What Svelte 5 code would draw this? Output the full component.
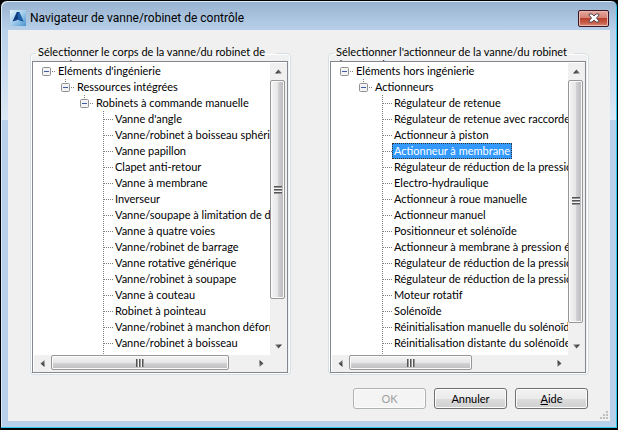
<script lang="ts">
	type Item = { label: string; children?: Item[] };
	type Pane = { id: string; title: string; root: Item; vThumb: number; hThumb: number };

	const leaves = (labels: string[]): Item[] => labels.map((label) => ({ label }));

	// Thumb sizes are the visible share of each list, in percent of the track
	const panes: Pane[] = [
		{
			id: "body",
			title: "Sélectionner le corps de la vanne/du robinet de contrôle :",
			vThumb: 85,
			hThumb: 88,
			root: {
				label: "Eléments d'ingénierie",
				children: [
					{
						label: "Ressources intégrées",
						children: [
							{
								label: "Robinets à commande manuelle",
								children: leaves([
									"Vanne d'angle",
									"Vanne/robinet à boisseau sphérique",
									"Vanne papillon",
									"Clapet anti-retour",
									"Vanne à membrane",
									"Inverseur",
									"Vanne/soupape à limitation de débit",
									"Vanne à quatre voies",
									"Vanne/robinet de barrage",
									"Vanne rotative générique",
									"Vanne/robinet à soupape",
									"Vanne à couteau",
									"Robinet à pointeau",
									"Vanne/robinet à manchon déformable",
									"Vanne/robinet à boisseau"
								])
							}
						]
					}
				]
			}
		},
		{
			id: "actuator",
			title: "Sélectionner l'actionneur de la vanne/du robinet de contrôle :",
			vThumb: 94,
			hThumb: 61,
			root: {
				label: "Eléments hors ingénierie",
				children: [
					{
						label: "Actionneurs",
						children: leaves([
							"Régulateur de retenue",
							"Régulateur de retenue avec raccordement",
							"Actionneur à piston",
							"Actionneur à membrane",
							"Régulateur de réduction de la pression",
							"Electro-hydraulique",
							"Actionneur à roue manuelle",
							"Actionneur manuel",
							"Positionneur et solénoïde",
							"Actionneur à membrane à pression équilibrée",
							"Régulateur de réduction de la pression ",
							"Régulateur de réduction de la pression  ",
							"Moteur rotatif",
							"Solénoïde",
							"Réinitialisation manuelle du solénoïde",
							"Réinitialisation distante du solénoïde"
						])
					}
				]
			}
		}
	];

	let selected = $state("Actionneur à membrane");
	let closed = $state<Record<string, boolean>>({});
</script>

{#snippet arrow(dir: string)}
	<button class="arrow" aria-label={dir}>
		<svg class={dir} width="7" height="7" viewBox="0 0 7 7" aria-hidden="true">
			<path d="M0 5.5 3.5 1.5 7 5.5z" fill="url(#arrow-fill)" />
		</svg>
	</button>
{/snippet}

{#snippet node(item: Item)}
	<li class:branch={item.children}>
		<div class="row">
			{#if item.children}
				<button
					class="toggle"
					aria-label="Développer ou réduire"
					onclick={() => (closed[item.label] = !closed[item.label])}
				>
					<svg width="9" height="9" viewBox="0 0 9 9" aria-hidden="true">
						<rect x="0.5" y="0.5" width="8" height="8" rx="1" fill="#f3f3f3" stroke="#919191" />
						<path d="M2 4.5h5" stroke="#3d5ba5" />
						{#if closed[item.label]}
							<path d="M4.5 2v5" stroke="#3d5ba5" />
						{/if}
					</svg>
				</button>
			{/if}
			<span class="dots"></span>
			<button
				class="label"
				class:selected={selected === item.label}
				onclick={() => (selected = item.label)}
			>
				{item.label}
			</button>
		</div>
		{#if item.children && !closed[item.label]}
			<ul class:leaves={!item.children[0].children}>
				{#each item.children as child}
					{@render node(child)}
				{/each}
			</ul>
		{/if}
	</li>
{/snippet}

<div class="window">
	<header>
		<svg class="logo" width="16" height="16" viewBox="0 0 16 16" aria-hidden="true">
			<defs>
				<linearGradient id="logo-fill" x1="0" y1="0" x2="1" y2="1">
					<stop offset="0" stop-color="#e4f2fb" />
					<stop offset="0.5" stop-color="#a3cdeb" />
					<stop offset="1" stop-color="#4a94cf" />
				</linearGradient>
				<linearGradient id="arrow-fill" x1="0" y1="0" x2="1" y2="0">
					<stop offset="0" stop-color="#222" />
					<stop offset="1" stop-color="#888" />
				</linearGradient>
			</defs>
			<rect width="16" height="16" fill="url(#logo-fill)" />
			<path d="M2.5 11.5 6.8 2h2.4l4.3 9.500L10 10.500 8 9.500 6 10.500z" fill="#0f3f80" />
			<path d="M8 3v6.500l2 1 3.500 1L9.200 2z" fill="#1d5fa8" />
		</svg>
		<h1>Navigateur de vanne/robinet de contrôle</h1>
		<button class="close" aria-label="Fermer">
			<svg width="12" height="10" viewBox="0 0 12 10" aria-hidden="true">
				<path
					d="M1 1h3l2 2 2-2h3v1L8.500 5 11 8v1H8L6 7 4 9H1V8l2.500-3L1 2z"
					fill="#fff"
					stroke="#5b4a55"
				/>
			</svg>
		</button>
	</header>

	<main>
		<div class="panes">
			{#each panes as pane (pane.id)}
				<fieldset>
					<legend>{pane.title}</legend>
					<div class="tree">
						<div class="view">
							<ul class="root">
								{@render node(pane.root)}
							</ul>
						</div>
						<div class="bar vertical">
							{@render arrow("up")}
							<div class="track">
								<div class="thumb" style="height: {pane.vThumb}%"><i></i></div>
							</div>
							{@render arrow("down")}
						</div>
						<div class="bar horizontal">
							{@render arrow("left")}
							<div class="track">
								<div class="thumb" style="width: {pane.hThumb}%"><i></i></div>
							</div>
							{@render arrow("right")}
						</div>
						<div class="corner"></div>
					</div>
				</fieldset>
			{/each}
		</div>

		<footer>
			<button class="action" disabled>OK</button>
			<button class="action">Annuler</button>
			<button class="action"><u>A</u>ide</button>
		</footer>
		<svg class="grip" width="9" height="9" viewBox="0 0 9 9" aria-hidden="true">
			<path
				d="M6 0h2v2H6zM3 3h2v2H3zM6 3h2v2H6zM0 6h2v2H0zM3 6h2v2H3zM6 6h2v2H6z"
				fill="#bfbfbf"
			/>
		</svg>
	</main>
</div>

<style>
	:global(body) {
		background: #000;
	}

	.window {
		box-sizing: border-box;
		padding: 0 6px 7px;
		border: 1px solid #000;
		border-radius: 7px 7px 0 0;
		background:
			linear-gradient(#97b2d0, #b9d1ea 30px, #dce8f5 119px, transparent 119px) no-repeat,
			#b9d0ea;
		box-shadow:
			inset -1px -1px #2bcbf0,
			inset 1px 1px #dcebf8;
		font-family: Lato, "Liberation Sans", sans-serif;
		font-size: 11px;
		color: #000;
	}

	button {
		margin: 0;
		padding: 0;
		border: 0;
		background: none;
		font: inherit;
		color: inherit;
	}

	header {
		display: flex;
		align-items: center;
		height: 29px;
		padding: 5px 2px 0 3px;
		box-sizing: border-box;
	}

	h1 {
		flex: 1;
		margin: 0 0 0 4px;
		font: 12px/16px Roboto, sans-serif;
	}

	.close {
		display: flex;
		align-items: center;
		justify-content: center;
		width: 31px;
		height: 17px;
		border: 1px solid #3c1620;
		border-radius: 2px;
		background: linear-gradient(#e5a69c, #d68275 45%, #b8402c 50%, #c9604a 80%, #d98f76);
		box-shadow: inset 0 0 0 1px #e9b8b0;
	}

	main {
		margin: 0 1px;
		padding: 15px 21px 12px 22px;
		background: #f0f0f0;
		position: relative;
	}

	.panes {
		display: grid;
		grid-template-columns: 1fr 1fr;
		gap: 37px;
	}

	fieldset {
		min-width: 0;
		margin: 0;
		padding: 0 2px 1px 1px;
		border: 1px solid #d5dfe5;
		border-radius: 4px;
		box-shadow: inset 0 0 0 1px #fff;
	}

	legend {
		box-sizing: border-box;
		max-width: 240px;
		height: 16px;
		margin-left: 4px;
		padding: 0 2px;
		overflow: hidden;
		line-height: 13px;
	}

	.tree {
		display: grid;
		grid-template-columns: minmax(0, 1fr) 17px;
		padding: 1px 0 0 1px;
		border: 1px solid #828790;
		background: #fff;
	}

	.view {
		overflow: hidden;
	}

	ul {
		margin: 0;
		padding: 0 0 0 19px;
		list-style: none;
	}

	.root {
		padding-left: 8px;
	}

	.leaves {
		margin-left: 23px;
		padding: 0 0 4px;
		background: repeating-linear-gradient(#808080 0 1px, transparent 1px 2px) 0 0 / 1px 100%
			no-repeat;
	}

	.row {
		display: flex;
		align-items: center;
		height: 16px;
	}

	ul:not(.root) > .branch > .row {
		background: repeating-linear-gradient(#808080 0 1px, transparent 1px 2px) 4px 0 / 1px 4px
			no-repeat;
	}

	.toggle {
		display: flex;
	}

	.dots {
		flex: none;
		width: 5px;
		height: 1px;
		background: repeating-linear-gradient(90deg, transparent 0 1px, #808080 1px 2px);
	}

	.leaves .dots {
		width: 10px;
	}

	.label {
		height: 16px;
		padding: 0 2px;
		line-height: 16px;
		white-space: nowrap;
	}

	.selected {
		outline: 1px dotted #333;
		outline-offset: -1px;
		background: #3399ff;
		color: #fff;
	}

	.bar,
	.corner {
		background: #f0f0f0;
	}

	.bar {
		display: flex;
	}

	.vertical {
		flex-direction: column;
	}

	.arrow {
		display: flex;
		flex: none;
		align-items: center;
		justify-content: center;
		width: 17px;
		height: 17px;
	}

	.down {
		transform: rotate(180deg);
	}

	.left {
		transform: rotate(-90deg);
	}

	.right {
		transform: rotate(90deg);
	}

	.track {
		flex: 1;
	}

	.thumb {
		display: flex;
		align-items: center;
		justify-content: center;
		box-sizing: border-box;
		border: 1px solid #979797;
		border-radius: 2px;
		box-shadow: inset 0 0 0 1px #fafafa;
	}

	.vertical .thumb {
		width: 15px;
		background: linear-gradient(90deg, #f5f5f5, #e6e6e8 50%, #d2d2d5 55%, #b8b8bc);
	}

	.horizontal .thumb {
		height: 15px;
		background: linear-gradient(#f5f5f5, #e6e6e8 50%, #d2d2d5 55%, #bdbdc0);
	}

	.thumb i {
		width: 8px;
		height: 8px;
		background: repeating-linear-gradient(#555 0 1px, #999 1px 2px, #f4f4f4 2px 3px);
	}

	.horizontal .thumb i {
		background: repeating-linear-gradient(90deg, #555 0 1px, #999 1px 2px, #f4f4f4 2px 3px);
	}

	footer {
		display: flex;
		justify-content: flex-end;
		gap: 8px;
		margin-top: 13px;
		padding-right: 1px;
	}

	.action {
		width: 73px;
		height: 21px;
		border: 1px solid #707070;
		border-radius: 3px;
		background: linear-gradient(#f2f2f2, #ebebeb 50%, #dddddd 50%, #cfcfcf);
		box-shadow: inset 0 0 0 1px #fcfcfc;
	}

	.action:disabled {
		border-color: #adb2b5;
		background: #f4f4f4;
		color: #a0a0a0;
	}

	.grip {
		position: absolute;
		right: 1px;
		bottom: 1px;
	}
</style>
